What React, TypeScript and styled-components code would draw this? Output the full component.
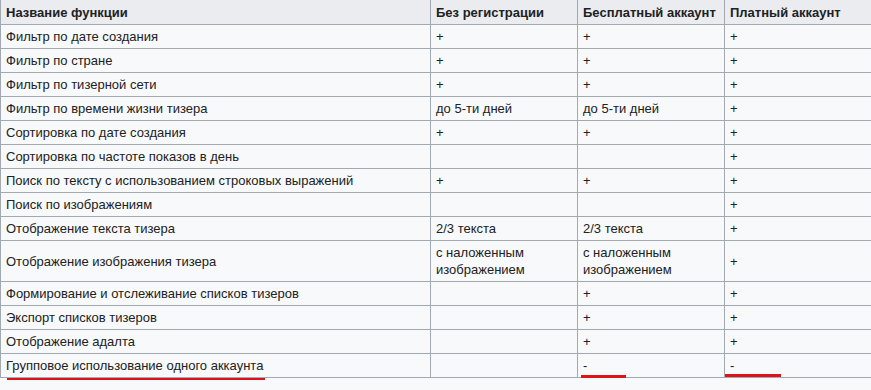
import * as React from 'react';
import styled, { createGlobalStyle } from 'styled-components';

interface rowInterface {
  name: string;
  guest: string;
  free: string;
  paid: string;
}

const rows: rowInterface[] = [
  { name: 'Фильтр по дате создания', guest: '+', free: '+', paid: '+' },
  { name: 'Фильтр по стране', guest: '+', free: '+', paid: '+' },
  { name: 'Фильтр по тизерной сети', guest: '+', free: '+', paid: '+' },
  { name: 'Фильтр по времени жизни тизера', guest: 'до 5-ти дней', free: 'до 5-ти дней', paid: '+' },
  { name: 'Сортировка по дате создания', guest: '+', free: '+', paid: '+' },
  { name: 'Сортировка по частоте показов в день', guest: '', free: '', paid: '+' },
  { name: 'Поиск по тексту с использованием строковых выражений', guest: '+', free: '+', paid: '+' },
  { name: 'Поиск по изображениям', guest: '', free: '', paid: '+' },
  { name: 'Отображение текста тизера', guest: '2/3 текста', free: '2/3 текста', paid: '+' },
  { name: 'Отображение изображения тизера', guest: 'с наложенным изображением', free: 'с наложенным изображением', paid: '+' },
  { name: 'Формирование и отслеживание списков тизеров', guest: '', free: '+', paid: '+' },
  { name: 'Экспорт списков тизеров', guest: '', free: '+', paid: '+' },
  { name: 'Отображение адалта', guest: '', free: '+', paid: '+' },
];

export default function App() {
  return (
    <Page>
      <GlobalStyle />
      <Table>
        <colgroup>
          <col style={{ width: 430 }} />
          <col style={{ width: 147 }} />
          <col style={{ width: 147 }} />
          <col style={{ width: 147 }} />
        </colgroup>
        <thead>
          <tr>
            <HeadCell>Название функции</HeadCell>
            <HeadCell>Без регистрации</HeadCell>
            <HeadCell>Бесплатный аккаунт</HeadCell>
            <HeadCell>Платный аккаунт</HeadCell>
          </tr>
        </thead>
        <tbody>
          {rows.map((r) => (
            <tr key={r.name}>
              <Cell>{r.name}</Cell>
              <Cell>{r.guest}</Cell>
              <Cell>{r.free}</Cell>
              <Cell>{r.paid}</Cell>
            </tr>
          ))}
          <tr>
            <Cell>
              Групповое использование одного аккаунта
              <Mark $left={6} $top={24} $width={258} $height={2} />
            </Cell>
            <Cell />
            <Cell>
              -
              <Mark $left={3} $top={21} $width={45} $height={3} />
            </Cell>
            <Cell>
              -
              <Mark $left={0} $top={20} $width={56} $height={3} />
            </Cell>
          </tr>
        </tbody>
      </Table>
    </Page>
  );
}

const GlobalStyle = createGlobalStyle`
  html, body {
    margin: 0;
    padding: 0;
    background: #f8f9fa;
  }
`;

const Page = styled.div`
  min-height: 390px;
  overflow: hidden;
`;

const Table = styled.table`
  border-collapse: collapse;
  table-layout: fixed;
  width: 872px;
  margin-top: -1px;
  background: #f8f9fa;
  color: #202122;
  font-family: 'Liberation Sans', Arial, sans-serif;
  font-size: 13px;
  line-height: 17px;
`;

const HeadCell = styled.th`
  background: #eaecf0;
  border: 1px solid #a2a9b1;
  padding: 4px 5px 3px;
  text-align: left;
  font-weight: bold;
`;

const Cell = styled.td`
  position: relative;
  border: 1px solid #a2a9b1;
  padding: 3px 5px;
  text-align: left;
  vertical-align: middle;
`;

const Mark = styled.span<{ $left: number; $top: number; $width: number; $height: number }>`
  position: absolute;
  left: ${(p) => p.$left}px;
  top: ${(p) => p.$top}px;
  width: ${(p) => p.$width}px;
  height: ${(p) => p.$height}px;
  background: #e0121b;
`;
